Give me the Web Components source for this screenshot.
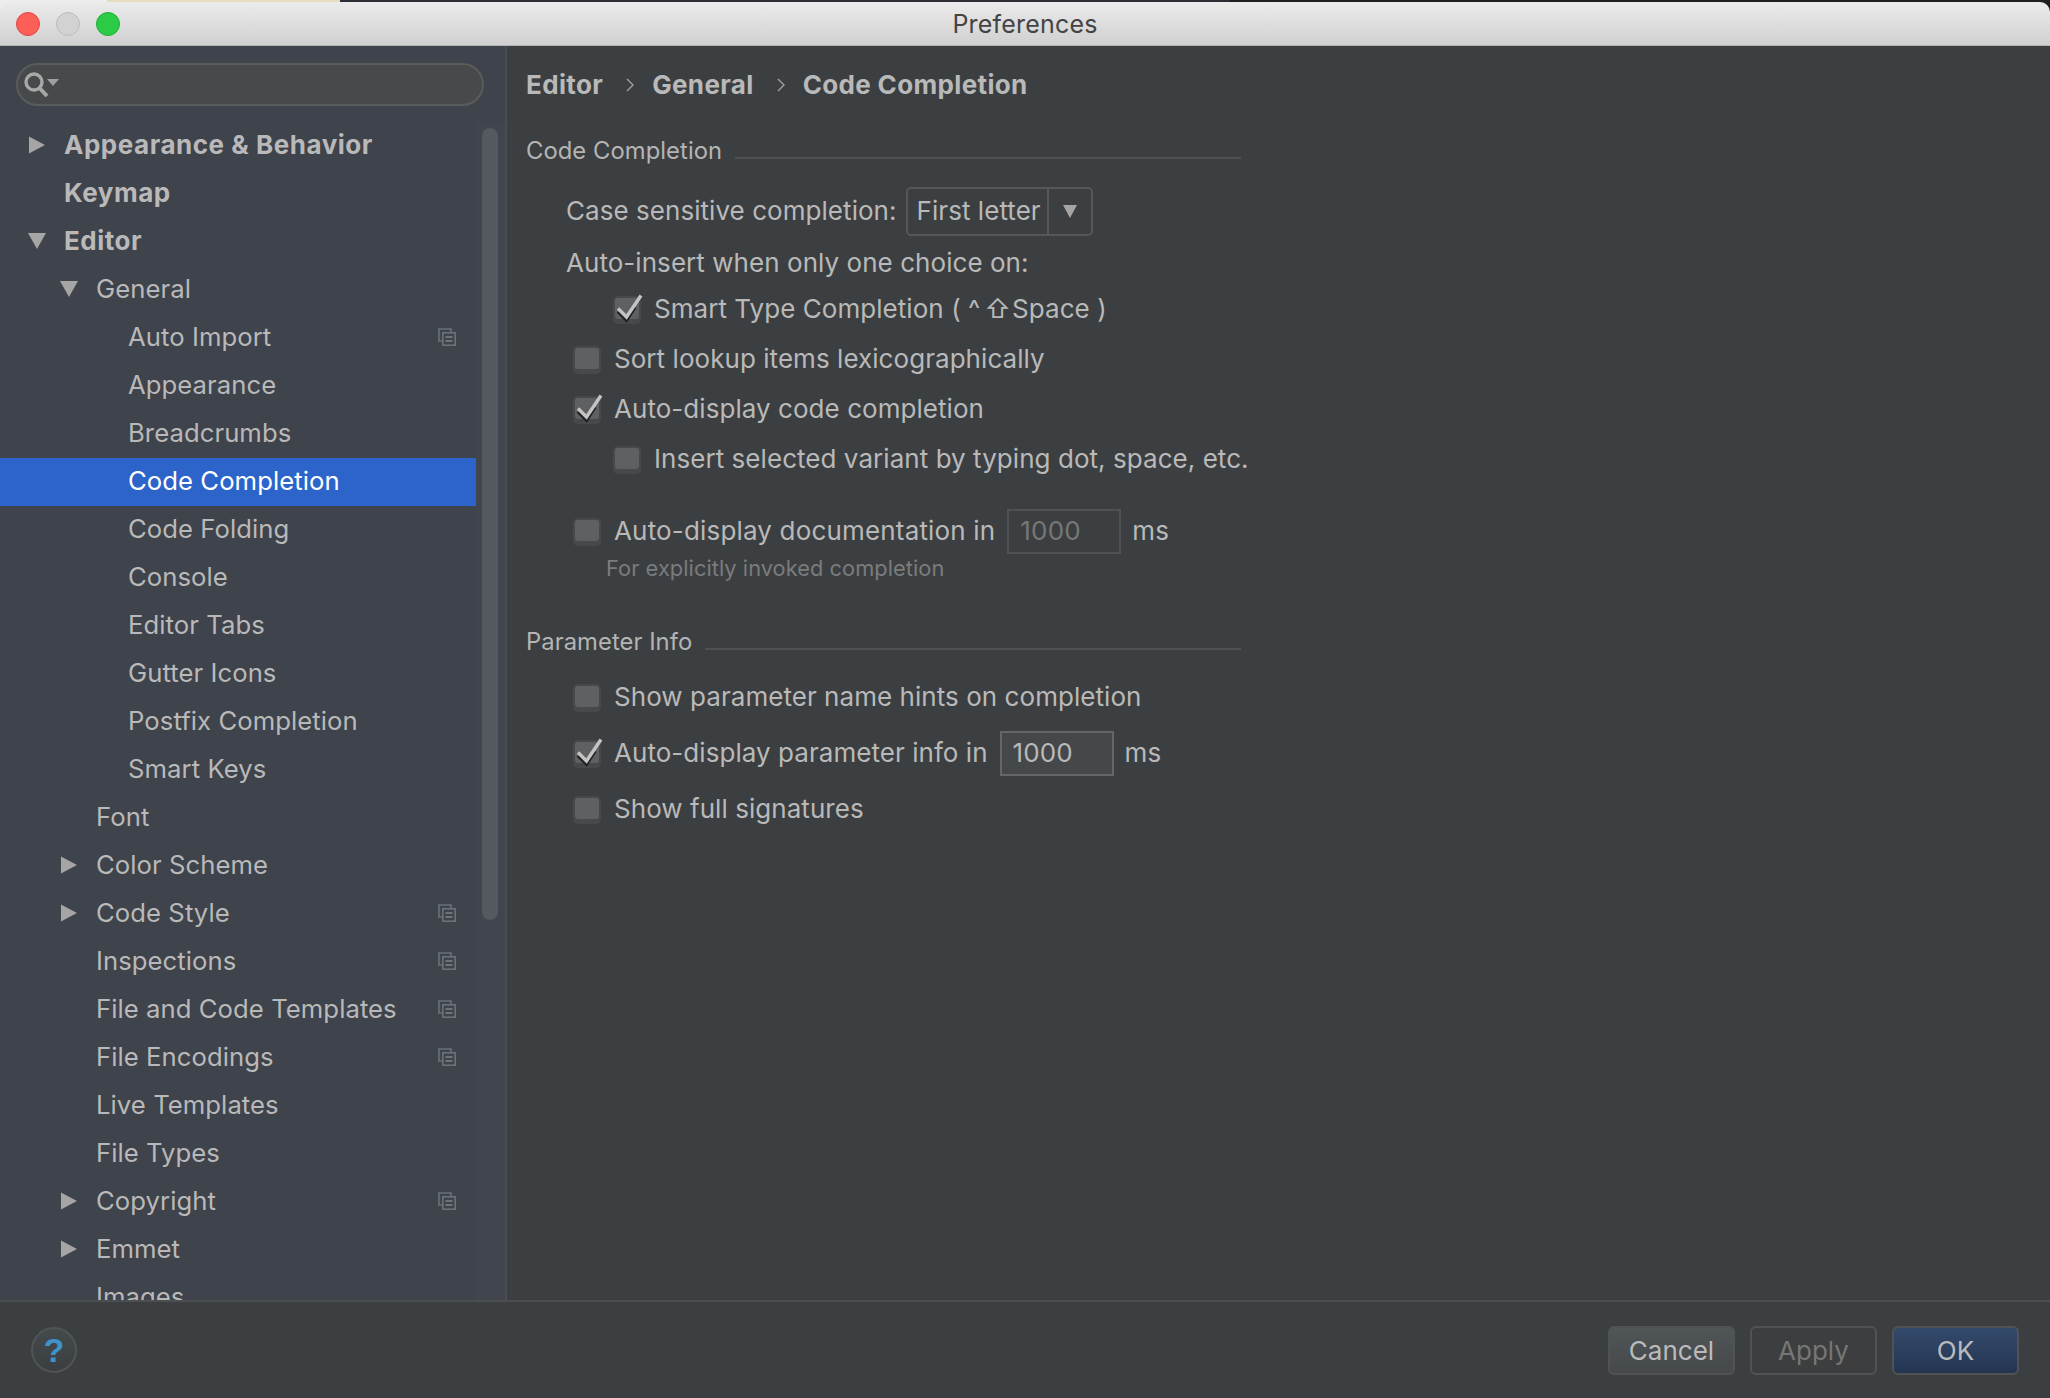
<!DOCTYPE html>
<html>
<head>
<meta charset="utf-8">
<title>Preferences</title>
<style>
  html, body { margin: 0; padding: 0; height: 100%; overflow: hidden; }
  body {
    background: linear-gradient(90deg, #eee 0, #eee 107px, #e6dcc0 107px, #e6dcc0 340px, #2b2d33 340px, #2b2d33 1230px, #1f1f20 1230px);
    font-family: Inter, "Liberation Sans", sans-serif;
  }
</style>
</head>
<body>
<prefs-window>
  <title-bar slot="title">Preferences</title-bar>
  <settings-tree slot="side">
    <tree-row bold arrow="right">Appearance &amp; Behavior</tree-row>
    <tree-row bold>Keymap</tree-row>
    <tree-row bold arrow="down">Editor</tree-row>
    <tree-row level="1" arrow="down">General</tree-row>
    <tree-row level="2" copy>Auto Import</tree-row>
    <tree-row level="2">Appearance</tree-row>
    <tree-row level="2">Breadcrumbs</tree-row>
    <tree-row level="2" selected>Code Completion</tree-row>
    <tree-row level="2">Code Folding</tree-row>
    <tree-row level="2">Console</tree-row>
    <tree-row level="2">Editor Tabs</tree-row>
    <tree-row level="2">Gutter Icons</tree-row>
    <tree-row level="2">Postfix Completion</tree-row>
    <tree-row level="2">Smart Keys</tree-row>
    <tree-row level="1">Font</tree-row>
    <tree-row level="1" arrow="right">Color Scheme</tree-row>
    <tree-row level="1" arrow="right" copy>Code Style</tree-row>
    <tree-row level="1" copy>Inspections</tree-row>
    <tree-row level="1" copy>File and Code Templates</tree-row>
    <tree-row level="1" copy>File Encodings</tree-row>
    <tree-row level="1">Live Templates</tree-row>
    <tree-row level="1">File Types</tree-row>
    <tree-row level="1" arrow="right" copy>Copyright</tree-row>
    <tree-row level="1" arrow="right">Emmet</tree-row>
    <tree-row level="1">Images</tree-row>
  </settings-tree>
  <settings-panel slot="main">
    <bread-crumbs></bread-crumbs>
    <group-title>Code Completion</group-title>
    <form-row indent="40" style="margin-top:15px">Case sensitive completion:<combo-box>First letter</combo-box></form-row>
    <form-row indent="40" style="margin-top:14px">Auto-insert when only one choice on:</form-row>
    <check-row indent="87" checked style="margin-top:8px">Smart Type Completion ( <span style="letter-spacing:4px">^</span><span style="letter-spacing:1px">⇧</span>Space )</check-row>
    <check-row indent="47" style="margin-top:12px">Sort lookup items lexicographically</check-row>
    <check-row indent="47" checked style="margin-top:12px">Auto-display code completion</check-row>
    <check-row indent="87" style="margin-top:12px">Insert selected variant by typing dot, space, etc.</check-row>
    <check-row indent="47" style="margin-top:34px;letter-spacing:.17px">Auto-display documentation in<num-field disabled>1000</num-field>ms</check-row>
    <hint-line>For explicitly invoked completion</hint-line>
    <group-title style="margin-top:33px">Parameter Info</group-title>
    <check-row indent="47" style="margin-top:10px">Show parameter name hints on completion</check-row>
    <check-row indent="47" checked style="margin-top:18px">Auto-display parameter info in<num-field>1000</num-field>ms</check-row>
    <check-row indent="47" style="margin-top:18px">Show full signatures</check-row>
  </settings-panel>
  <dialog-footer slot="footer"></dialog-footer>
</prefs-window>

<script>
  function define(name, css, html) {
    customElements.define(name, class extends HTMLElement {
      constructor() {
        super();
        this.attachShadow({ mode: 'open' });
        this.shadowRoot.innerHTML = `<style>${css}</style>${typeof html === 'function' ? html(this) : html}`;
      }
    });
  }

  define('prefs-window', `
    :host { display: grid; grid-template-columns: 505px 2px 1fr; grid-template-rows: 44px 1fr 98px; width: 2050px; height: 1396px; margin-top: 2px; }
    .title { grid-column: 1 / -1; }
    .line { background: #4a4c4d; }
    .foot { grid-column: 1 / -1; }
    .side, .main { min-height: 0; overflow: hidden; }
  `, `
    <div class="title"><slot name="title"></slot></div>
    <div class="side"><slot name="side"></slot></div>
    <div class="line"></div>
    <div class="main"><slot name="main"></slot></div>
    <div class="foot"><slot name="footer"></slot></div>
  `);

  define('title-bar', `
    :host { display: flex; align-items: center; height: 44px; box-sizing: border-box; position: relative; border-radius: 10px 10px 0 0;
      background: linear-gradient(#ebebeb, #d0d0d0); border-bottom: 1px solid #b4b4b4; padding-left: 16px; color: #444; font: 25px/1 Inter, "Liberation Sans", sans-serif; letter-spacing: .2px; }
    .dot { width: 24px; height: 24px; border-radius: 50%; box-sizing: border-box; margin-right: 16px; }
    .r { background: #fc5f58; border: 1px solid #e2463f; }
    .y { background: #d2d2d2; border: 1px solid #bcbcbc; }
    .g { background: #2ccb45; border: 1px solid #1fad33; }
    .t { position: absolute; left: 0; right: 0; top: 0; bottom: 0; display: flex; align-items: center; justify-content: center; padding-top: 2px; box-sizing: border-box; }
  `, `<span class="dot r"></span><span class="dot y"></span><span class="dot g"></span><span class="t"><slot></slot></span>`);

  define('settings-tree', `
    :host { display: block; height: 100%; background: #3f434b; position: relative; overflow: hidden; }
    .search { display: flex; align-items: center; height: 43px; box-sizing: border-box; margin: 17px 21px 16px 16px; border: 2px solid #5a5c5c; border-radius: 22px; background: #464a4a; padding-left: 5px; }
    .gutter { position: absolute; left: 476px; right: 0; top: 76px; bottom: 0; background: #41454d; }
    .thumb { position: absolute; left: 482px; width: 16px; top: 82px; height: 792px; border-radius: 8px; background: #55585e; }
    .rows { position: relative; }
  `, `
    <div class="search">
      <svg width="36" height="28" viewBox="0 0 36 28"><circle cx="11" cy="11" r="8" fill="none" stroke="#a8a8a8" stroke-width="3.4"/><path d="M16.5 17 L24 25" stroke="#a8a8a8" stroke-width="4"/><path d="M24 8 H36 L30 15 Z" fill="#a0a0a0"/></svg>
    </div>
    <div class="gutter"></div>
    <div class="rows"><slot></slot></div>
    <div class="thumb"></div>
  `);

  const ARROWS = {
    right: '<svg width="16" height="20" viewBox="0 0 16 20"><path d="M0 1.5 L16 10 L0 18.5 Z" fill="#a5a5a5"/></svg>',
    down: '<svg width="20" height="18" viewBox="0 0 20 18"><path d="M1 1 H19 L10 17 Z" fill="#a5a5a5"/></svg>'
  };
  define('tree-row', `
    :host { display: flex; align-items: center; height: 48px; width: 476px; box-sizing: border-box; padding-bottom: 2px; color: #b9b9b9; font: 400 25.7px/1 Inter, "Liberation Sans", sans-serif; letter-spacing: .05px; position: relative; white-space: nowrap; }
    :host([bold]) { font-weight: 700; font-size: 26px; letter-spacing: .53px; }
    :host([selected]) { background: #2d64ca; color: #fff; }
    .arrow { position: absolute; top: 13px; display: flex; width: 20px; height: 20px; align-items: center; justify-content: center; }
    .copy { position: absolute; left: 438px; top: 14px; }
  `, (el) => {
    const level = +(el.getAttribute('level') || 0);
    const arrow = el.getAttribute('arrow');
    const pad = 64 + level * 32;
    const ax = 27 + level * 32;
    return `
      ${arrow ? `<span class="arrow" style="left:${ax}px">${ARROWS[arrow]}</span>` : ''}
      <span style="margin-left:${pad}px"><slot></slot></span>
      ${el.hasAttribute('copy') ? `<svg class="copy" width="18" height="18" viewBox="0 0 18 18" fill="none" stroke-width="1.6">
        <path d="M4 13 H1 V1 H13 V4" stroke="#66727c"/><rect x="4.8" y="4.8" width="12.4" height="12.4" stroke="#6f7175"/>
        <path d="M7.5 9 H14.5 M7.5 13 H14.5" stroke="#6f7175" stroke-width="2"/></svg>` : ''}
    `;
  });

  define('settings-panel', `
    :host { display: block; height: 100%; background: #3c3f41; box-sizing: border-box; padding-left: 19px; color: #b9b9b9; font: 400 26px/1 Inter, "Liberation Sans", sans-serif; letter-spacing: .05px; }
  `, `<slot></slot>`);

  define('bread-crumbs', `
    :host { display: flex; align-items: center; height: 77px; margin-bottom: 2px; font-weight: 700; color: #b9b9b9; white-space: nowrap; letter-spacing: .35px; }
    svg { margin: 0 18px 0 23px; }
  `, () => {
    const chev = '<svg width="8" height="16" viewBox="0 0 8 16"><path d="M1 2 L7 8 L1 14" fill="none" stroke="#a0a0a0" stroke-width="1.4"/></svg>';
    return `<span>Editor</span>${chev}<span>General</span>${chev}<span>Code Completion</span>`;
  });

  define('group-title', `
    :host { display: flex; height: 52px; align-items: center; font-size: 23.8px; color: #b4b4b4; width: 715px; white-space: nowrap; }
    .rule { flex: 1; height: 2px; background: #4f5152; margin: 13px 0 0 13px; }
  `, `<slot></slot><span class="rule"></span>`);

  define('form-row', `
    :host { display: flex; align-items: center; height: 38px; white-space: pre; }
  `, (el) => `<span style="width:${el.getAttribute('indent')}px;flex:none"></span><slot></slot>`);

  define('check-row', `
    :host { display: flex; align-items: center; height: 38px; white-space: pre; }
    .box { flex: none; position: relative; width: 28px; height: 26px; margin-right: 13px; }
    .box i { position: absolute; left: 0; top: 0; width: 28px; height: 25px; box-sizing: border-box; border-radius: 5px; background: #5e6062; border: 2px solid #47494b; box-shadow: 0 3px 0 #47494a; }
    .box svg { position: absolute; left: 0; top: -4px; }
    .txt { display: flex; align-items: center; }
    .txt ::slotted(span) { flex: none; }
  `, (el) => `
    <span style="width:${el.getAttribute('indent')}px;flex:none"></span>
    <span class="box"><i></i>${el.hasAttribute('checked') ? `<svg width="32" height="32" viewBox="0 0 32 32" fill="none">
      <path d="M5 19.5 L13.5 28 L22 15" stroke="#1e1f20" stroke-width="3.4"/>
      <path d="M5 16.5 L13.5 25 L28 3.5" stroke="#c4c4c4" stroke-width="3.4"/></svg>` : ''}</span>
    <span class="txt"><slot></slot></span>`);

  define('combo-box', `
    :host { display: flex; align-items: center; width: 187px; height: 49px; box-sizing: border-box; margin-left: 9px; border: 2px solid #555759; border-radius: 5px; color: #b9b9b9; }
    .v { flex: 1; padding-left: 9px; }
    .b { flex: none; width: 44px; height: 100%; border-left: 2px solid #555759; box-sizing: border-box; display: flex; align-items: center; justify-content: center; }
  `, `<span class="v"><slot></slot></span><span class="b"><svg width="14" height="13" viewBox="0 0 14 13"><path d="M0 0 H14 L7 13 Z" fill="#a5a5a5"/></svg></span>`);

  define('num-field', `
    :host { display: flex; align-items: center; width: 114px; height: 45px; box-sizing: border-box; margin: 0 11px 0 12px; padding-left: 11px; border: 2px solid #646668; background: #45484a; color: #b9b9b9; }
    :host([disabled]) { background: transparent; border-color: #505254; color: #777; }
  `, `<slot></slot>`);

  define('hint-line', `
    :host { display: block; margin: 3px 0 1px 80px; height: 30px; line-height: 30px; font-size: 21.8px; color: #7a7c7e; white-space: nowrap; }
  `, `<slot></slot>`);

  define('dialog-footer', `
    :host { display: flex; align-items: center; height: 98px; box-sizing: border-box; background: #3c3f41; border-top: 2px solid #4c4e4f; padding: 0 31px 0 31px; }
    .help { width: 46px; height: 46px; border-radius: 50%; box-sizing: border-box; border: 2px solid #505456; background: linear-gradient(#44494c, #3b3f41); display: flex; align-items: center; justify-content: center; color: #3d93c8; font: 700 34px/1 "Liberation Sans", sans-serif; }
    .sp { flex: 1; }
    .btn { width: 127px; height: 49px; box-sizing: border-box; margin-left: 15px; display: flex; align-items: center; justify-content: center; border: 2px solid #505254; border-radius: 6px; font-size: 26px; color: #bbb; }
    .cancel { background: linear-gradient(#505557, #45494b); }
    .apply { background: #3c3e40; color: #767676; }
    .ok { background: linear-gradient(#344a6b, #243552); }
  `, `<div class="help">?</div><div class="sp"></div><div class="btn cancel">Cancel</div><div class="btn apply">Apply</div><div class="btn ok">OK</div>`);
</script>
</body>
</html>
